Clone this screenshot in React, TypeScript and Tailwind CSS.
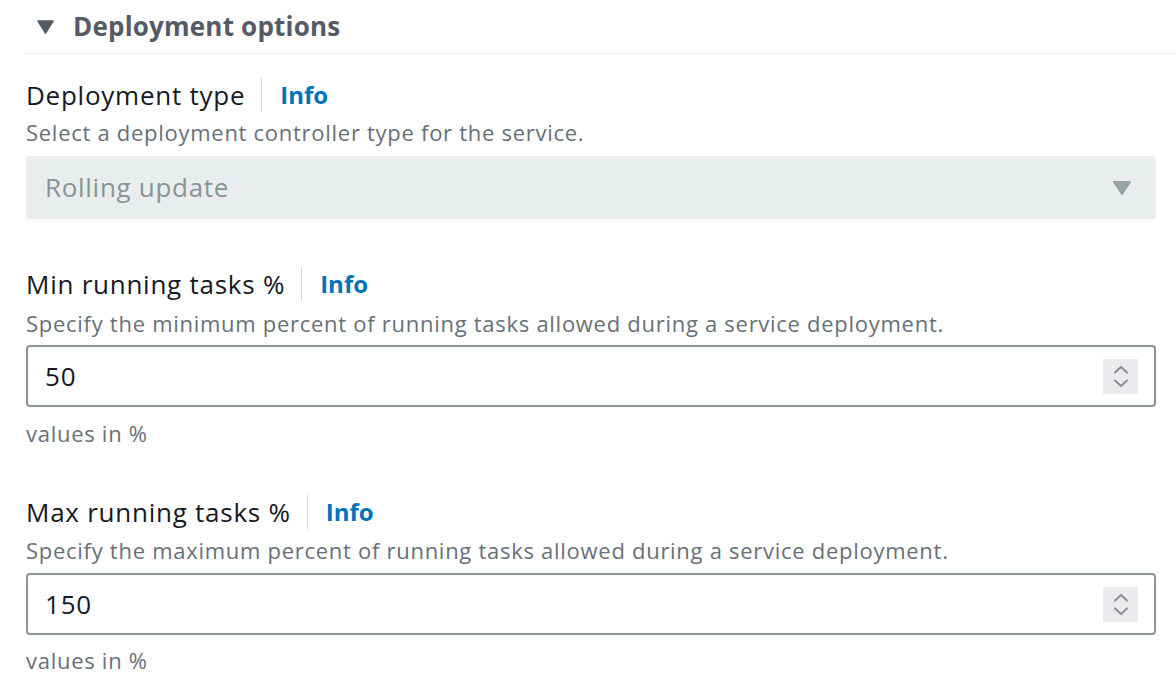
import React from 'react';

const font = { fontFamily: '"Open Sans", "Noto Sans", sans-serif' };

function Label({ text }: { text: string }) {
  return (
    <div className="flex items-center h-[34px]">
      <span className="text-[26px] leading-[34px] tracking-[0.75px] text-[#16191f]">{text}</span>
      <span className="ml-[16px] h-[34px] w-px bg-[#d5dbdb]" />
      <a className="ml-[18px] text-[24px] font-bold text-[#0073bb] leading-[34px]">Info</a>
    </div>
  );
}

function Spinner() {
  return (
    <div className="w-[35px] h-[35px] bg-[#e9ebed] flex flex-col items-center justify-center gap-[5px]">
      <svg width="16" height="9" viewBox="0 0 16 9" fill="none">
        <path d="M2 7.5 L8 2 L14 7.5" stroke="#8a8d99" strokeWidth="2" strokeLinecap="round" strokeLinejoin="round" />
      </svg>
      <svg width="16" height="9" viewBox="0 0 16 9" fill="none">
        <path d="M2 1.5 L8 7 L14 1.5" stroke="#8a8d99" strokeWidth="2" strokeLinecap="round" strokeLinejoin="round" />
      </svg>
    </div>
  );
}

function NumberInput({ value }: { value: string }) {
  return (
    <div className="h-[62px] border-2 border-[#879596] rounded-[4px] flex items-center justify-between pl-[17px] pr-[16px]">
      <span className="text-[26px] tracking-[0.8px] text-[#16191f]">{value}</span>
      <Spinner />
    </div>
  );
}

const desc = 'text-[22px] leading-[24px] tracking-[0.72px] text-[#687078]';

export default function App() {
  return (
    <div className="w-[1176px] h-[686px] bg-white overflow-hidden" style={font}>
      {/* Section header */}
      <div className="h-[53px] flex items-center">
        <svg className="ml-[37px]" width="17" height="14" viewBox="0 0 17 14">
          <path d="M1 1 H16 L8.5 13 Z" fill="#545b64" stroke="#545b64" strokeWidth="1.5" strokeLinejoin="round" />
        </svg>
        <span className="ml-[19px] text-[26px] font-bold tracking-[0.2px] text-[#545b64]">Deployment options</span>
      </div>
      <div className="ml-[26px] h-px bg-[#eaeded]" />

      <div className="px-[26px] pr-[20px]">
        {/* Deployment type */}
        <div className="mt-[24px]">
          <Label text="Deployment type" />
        </div>
        <p className={`mt-[8px] ${desc}`}>Select a deployment controller type for the service.</p>
        <div className="mt-[12px] h-[63px] bg-[#eaeded] rounded-[4px] flex items-center justify-between pl-[19px] pr-[24px]">
          <span className="text-[26px] tracking-[0.7px] text-[#879596]">Rolling update</span>
          <svg width="20" height="16" viewBox="0 0 20 16">
            <path d="M2 2 H18 L10 14 Z" fill="#95a5a6" stroke="#95a5a6" strokeWidth="2" strokeLinejoin="round" />
          </svg>
        </div>

        {/* Min running tasks */}
        <div className="mt-[48px]">
          <Label text="Min running tasks %" />
        </div>
        <p className={`mt-[10px] ${desc}`}>
          Specify the minimum percent of running tasks allowed during a service deployment.
        </p>
        <div className="mt-[10px]">
          <NumberInput value="50" />
        </div>
        <p className={`mt-[14px] ${desc}`}>values in %</p>

        {/* Max running tasks */}
        <div className="mt-[50px]">
          <Label text="Max running tasks %" />
        </div>
        <p className={`mt-[9px] ${desc}`}>
          Specify the maximum percent of running tasks allowed during a service deployment.
        </p>
        <div className="mt-[11px]">
          <NumberInput value="150" />
        </div>
        <p className={`mt-[13px] ${desc}`}>values in %</p>
      </div>
    </div>
  );
}
